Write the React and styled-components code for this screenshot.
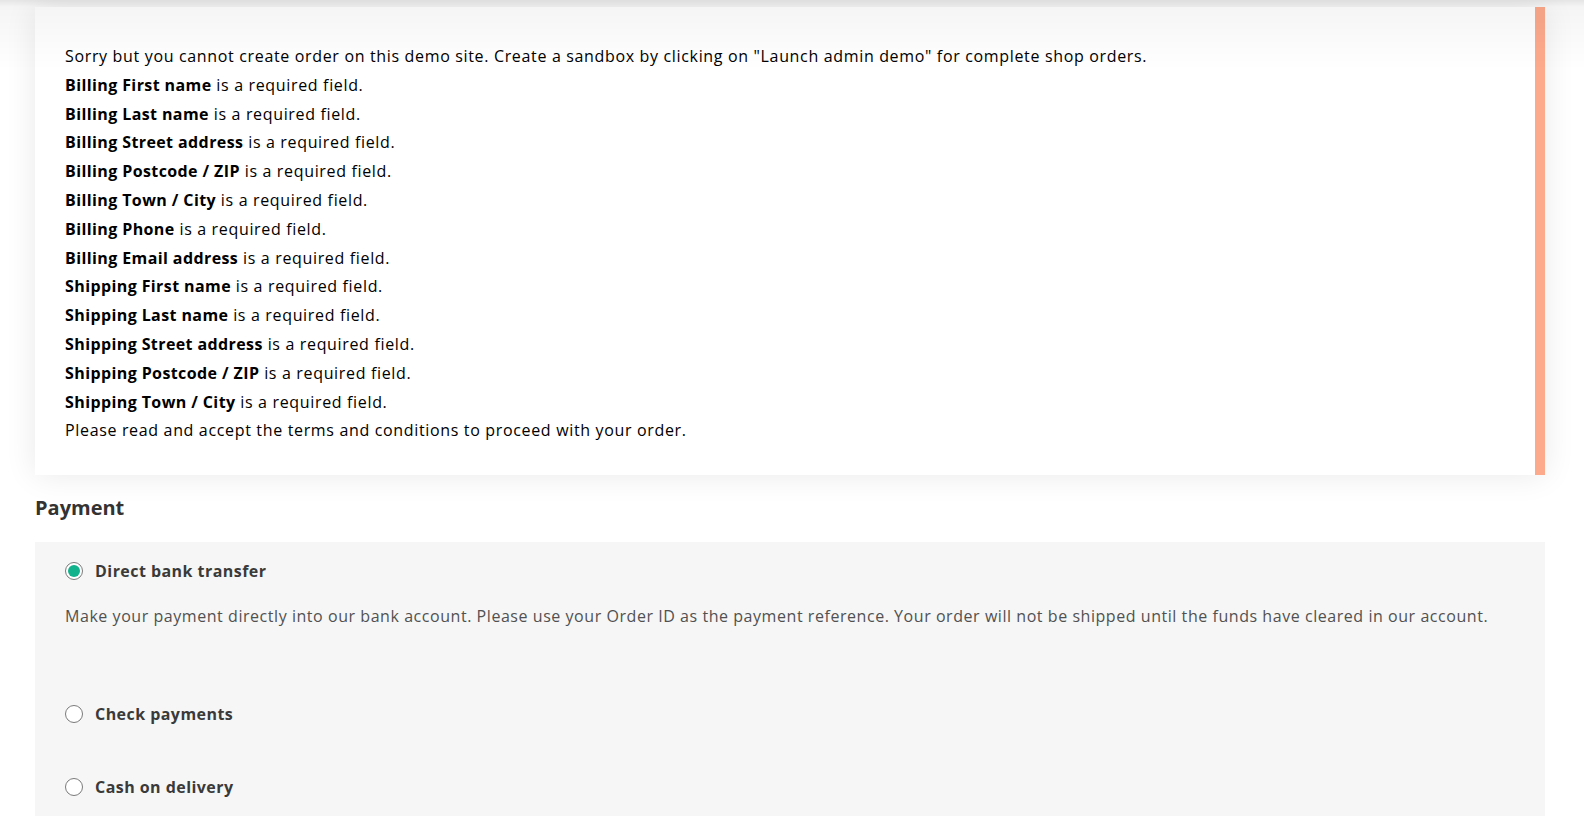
import React from "react";
import styled, { createGlobalStyle } from "styled-components";

const Global = createGlobalStyle`
  html, body { margin: 0; padding: 0; background: #fff; }
  body { font-family: "Open Sans", "Liberation Sans", sans-serif; font-size: 16px; color: #000; }
`;

const TopShade = styled.div`
  position: fixed;
  top: 0; left: 0; right: 0;
  height: 70px;
  pointer-events: none;
  background: linear-gradient(to bottom, rgba(0,0,0,0.10) 0px, rgba(0,0,0,0.04) 7px, rgba(0,0,0,0) 70px);
  z-index: 5;
`;

const Page = styled.div`
  padding: 7px 39px 0 35px;
  display: flex;
  flex-direction: column;
`;

const Notice = styled.ul`
  list-style: none;
  margin: 0;
  padding: 35px 30px 30px 30px;
  background: #fff;
  border-right: 10px solid #fda98c;
  box-shadow: 0 0 30px rgba(0,0,0,0.09);
  font-size: 16px;
  line-height: 28.8px;
  color: #000;
  letter-spacing: 0.66px;
`;

const NoticeItem = styled.li`
  margin: 0;
  strong { font-weight: 700; letter-spacing: 0.4px; }
`;

const Heading = styled.h3`
  margin: 20px 0 21px;
  font-size: 20px;
  line-height: 26px;
  font-weight: 700;
  color: #333;
`;

const Methods = styled.ul`
  list-style: none;
  margin: 0;
  padding: 14px 30px 15px;
  background: #f6f6f6;
  display: flex;
  flex-direction: column;
`;

const Method = styled.li`
  margin-top: ${(p) => p.$gap || 0}px;
`;

const Row = styled.label`
  display: flex;
  align-items: center;
  gap: 12px;
  height: 28.8px;
  font-weight: 700;
  font-size: 16px;
  letter-spacing: 0.45px;
  color: #3a3a3a;
`;

const Radio = styled.span`
  width: 18px;
  height: 18px;
  box-sizing: border-box;
  border-radius: 50%;
  border: 1px solid #7a7a7a;
  background: #fff;
  display: flex;
  align-items: center;
  justify-content: center;
  flex: none;
  &::after {
    content: "";
    width: 12px;
    height: 12px;
    border-radius: 50%;
    background: ${(p) => (p.$checked ? "#12b28c" : "transparent")};
  }
`;

const Desc = styled.p`
  margin: 17px 0 0;
  font-size: 16px;
  line-height: 28.8px;
  letter-spacing: 0.55px;
  color: #515151;
`;

const errors = [
  "Billing First name",
  "Billing Last name",
  "Billing Street address",
  "Billing Postcode / ZIP",
  "Billing Town / City",
  "Billing Phone",
  "Billing Email address",
  "Shipping First name",
  "Shipping Last name",
  "Shipping Street address",
  "Shipping Postcode / ZIP",
  "Shipping Town / City",
];

export default function App() {
  return (
    <>
      <Global />
      <TopShade />
      <Page>
        <Notice>
          <NoticeItem>
            Sorry but you cannot create order on this demo site. Create a sandbox by clicking on "Launch admin demo" for complete shop orders.
          </NoticeItem>
          {errors.map((f) => (
            <NoticeItem key={f}>
              <strong>{f}</strong> is a required field.
            </NoticeItem>
          ))}
          <NoticeItem>Please read and accept the terms and conditions to proceed with your order.</NoticeItem>
        </Notice>
        <Heading>Payment</Heading>
        <Methods>
          <Method>
            <Row>
              <Radio $checked />
              Direct bank transfer
            </Row>
            <Desc>
              Make your payment directly into our bank account. Please use your Order ID as the payment reference. Your order will not be shipped until the funds have cleared in our account.
            </Desc>
          </Method>
          <Method $gap={69}>
            <Row>
              <Radio />
              Check payments
            </Row>
          </Method>
          <Method $gap={44}>
            <Row>
              <Radio />
              Cash on delivery
            </Row>
          </Method>
        </Methods>
      </Page>
    </>
  );
}
